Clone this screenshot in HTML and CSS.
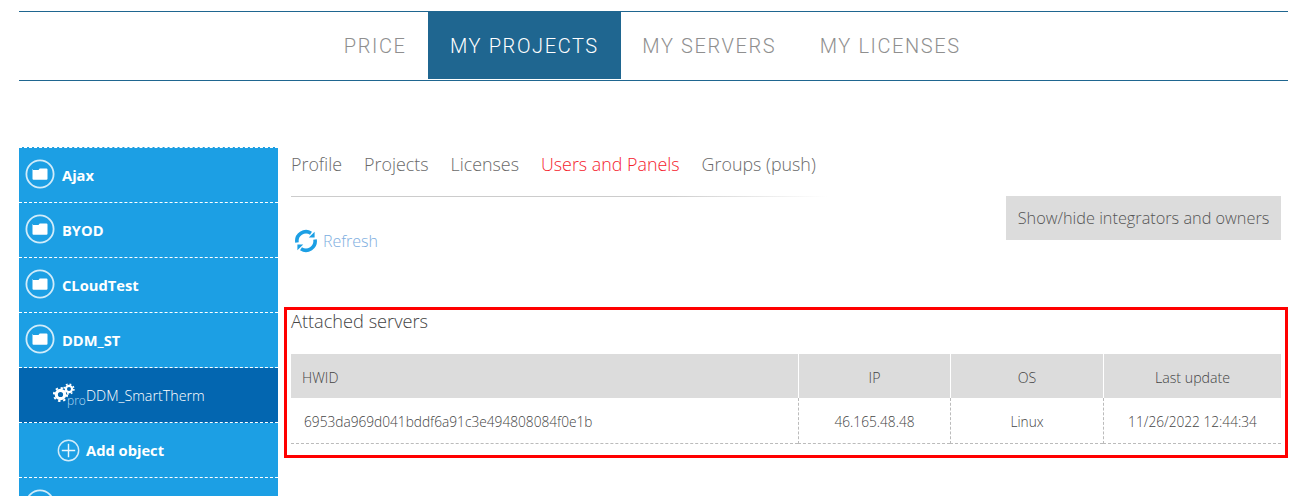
FILE: index.html
```html
<!DOCTYPE html>
<html lang="en">
<head>
<meta charset="utf-8">
<title>My Projects</title>
<link rel="stylesheet" href="styles.css">
</head>
<body>
<svg class="defs" width="0" height="0" aria-hidden="true">
  <symbol id="folder" viewBox="0 0 30 30">
    <circle cx="15" cy="15" r="13.6" fill="none" stroke="#fff" stroke-opacity=".8" stroke-width="1.8"/>
    <path d="M8 11h5.5l1.2-1.6h6.8a1 1 0 0 1 1 1v9.4a1 1 0 0 1-1 1H8.5a1 1 0 0 1-1-1v-9.3a.5.5 0 0 1 .5-.5z" fill="#fff"/>
  </symbol>
</svg>
<header class="topnav">
  <a class="topnav-item">PRICE</a>
  <a class="topnav-item is-active">MY PROJECTS</a>
  <a class="topnav-item">MY SERVERS</a>
  <a class="topnav-item">MY LICENSES</a>
</header>
<div class="layout">
  <nav class="sidebar">
    <a class="side-row"><svg class="folder-icon"><use href="#folder"/></svg><b>Ajax</b></a>
    <a class="side-row"><svg class="folder-icon"><use href="#folder"/></svg><b>BYOD</b></a>
    <a class="side-row"><svg class="folder-icon"><use href="#folder"/></svg><b>CLoudTest</b></a>
    <a class="side-row"><svg class="folder-icon"><use href="#folder"/></svg><b>DDM_ST</b></a>
    <a class="side-row side-sub is-current">
      <span class="pro-icon">
        <svg class="gears" viewBox="0 0 24 20" width="24" height="20">
          <g fill="none" stroke="#fff">
            <circle cx="7.5" cy="11.5" r="4.2" stroke-width="3.2"/>
            <circle cx="7.5" cy="11.5" r="6.6" stroke-width="2" stroke-dasharray="2.4 2.78"/>
            <circle cx="16" cy="6" r="3.1" stroke-width="2.2"/>
            <circle cx="16" cy="6" r="4.9" stroke-width="1.5" stroke-dasharray="1.8 2.05"/>
          </g>
        </svg>
        <span class="pro-label">pro</span>
      </span>
      <span class="sub-name">DDM_SmartTherm</span>
    </a>
    <a class="side-row side-sub side-add">
      <svg class="plus-icon" viewBox="0 0 24 24" width="23" height="23">
        <circle cx="12" cy="12" r="10.6" fill="none" stroke="#fff" stroke-opacity=".8" stroke-width="1.5"/>
        <path d="M12 5v14M5 12h14" stroke="#fff" stroke-opacity=".9" stroke-width="1.5"/>
      </svg>
      <b>Add object</b>
    </a>
    <a class="side-row"><svg class="folder-icon"><use href="#folder"/></svg></a>
  </nav>
  <main class="content">
    <ul class="tabs">
      <li>Profile</li>
      <li>Projects</li>
      <li>Licenses</li>
      <li class="is-active">Users and Panels</li>
      <li>Groups (push)</li>
    </ul>
    <div class="tabs-rule"></div>
    <div class="toolbar">
      <a class="refresh">
        <svg viewBox="0 0 24 24" width="24" height="24">
          <g fill="none" stroke="#1c9fe4" stroke-width="3.6">
            <path d="M3 13.5A9.2 9.2 0 0 1 17 4.2"/>
            <path d="M21 10.5A9.2 9.2 0 0 1 7 19.8"/>
          </g>
          <path d="M20.6 2.8v5.8h-5.8z M3.4 21.2v-5.8h5.8z" fill="#1c9fe4"/>
        </svg>
        <span>Refresh</span>
      </a>
      <button class="toggle-btn" type="button">Show/hide integrators and owners</button>
    </div>
    <section class="servers">
      <h2>Attached servers</h2>
      <table>
        <colgroup>
          <col class="col-hwid"><col class="col-ip"><col class="col-os"><col>
        </colgroup>
        <thead>
          <tr><th class="left">HWID</th><th>IP</th><th>OS</th><th>Last update</th></tr>
        </thead>
        <tbody>
          <tr><td class="hwid">6953da969d041bddf6a91c3e494808084f0e1b</td><td>46.165.48.48</td><td>Linux</td><td>11/26/2022 12:44:34</td></tr>
        </tbody>
      </table>
    </section>
  </main>
</div>
</body>
</html>
```
FILE: styles.css
```css
* { box-sizing: border-box; }
html, body { height: 496px; overflow: hidden; }
body { margin: 0; background: #fff; font-family: "Open Sans", "Liberation Sans", sans-serif; color: #444; }
.defs { position: absolute; }

.topnav {
  display: flex;
  justify-content: center;
  height: 70px;
  margin: 11px 21px 0 19px;
  padding-right: 2px;
  border-top: 1px solid #1f6690;
  border-bottom: 1px solid #1f6690;
  font-family: Roboto, sans-serif;
  font-weight: 300;
  font-size: 20px;
  letter-spacing: 1.6px;
  color: #8f8f8f;
}
.topnav-item { display: flex; align-items: center; height: 67px; padding: 0 22px 0 21.5px; }
.topnav-item.is-active { background: #1f6690; color: #fff; }

.layout { display: flex; height: 349px; overflow: hidden; margin: 66px 21px 0 19px; padding-right: 7px; align-items: flex-start; }

.sidebar { flex: 0 0 259px; background: #1c9fe4; border-top: 1px dashed #fff; color: #fff; font-size: 14.7px; }
.side-row { display: flex; align-items: center; height: 55px; padding-left: 6px; border-bottom: 1px dashed #fff; }
.side-row b { font-weight: 700; }
.folder-icon { width: 30px; height: 30px; margin-right: 7px; margin-top: -2px; }
.side-sub { padding-left: 34px; }
.is-current { background: #0366b0; }
.pro-icon { position: relative; width: 33px; height: 24px; flex: none; }
.gears { display: block; }
.pro-label { position: absolute; left: 14px; top: 9px; font-size: 12px; font-weight: 300; color: #b5dcf5; }
.sub-name { font-size: 14.3px; font-weight: 300; }
.side-add { padding-left: 38px; }
.plus-icon { margin-right: 6px; }

.content { flex: 1; padding: 4px 0 0 13px; min-width: 0; }
.tabs { display: flex; gap: 22px; margin: 0; padding: 0; list-style: none; font-size: 17.85px; font-weight: 300; color: #6a6a6a; line-height: 26px; }
.tabs .is-active { color: #f5222d; }
.tabs-rule { width: 536px; height: 1px; margin-top: 19px; background: linear-gradient(to right, #ccc 0, #ccc 70%, #fff 100%); }

.toolbar { display: flex; justify-content: space-between; align-items: flex-start; height: 110px; }
.refresh { display: flex; align-items: center; gap: 5px; margin: 32px 0 0 3px; color: #7daee0; font-size: 16px; font-weight: 300; }
.toggle-btn { height: 44px; width: 275px; margin-top: -1px; padding: 0; border: 0; background: #dcdcdc; color: #555; font: 300 16.3px "Open Sans", sans-serif; }

.servers { margin: 0 -7px; height: 151px; padding: 0 4px; border: 3px solid #f00; }
.servers h2 { margin: 0; height: 44px; font-size: 18.2px; font-weight: 300; color: #444; line-height: 22px; }
table { width: 100%; border-collapse: separate; border-spacing: 0; table-layout: fixed; font-size: 13.7px; font-weight: 300; }
.col-hwid { width: 507px; }
.col-ip { width: 152px; }
.col-os { width: 153px; }
th { height: 44px; padding-top: 3px; background: #dcdcdc; font-size: 14.2px; font-weight: 300; text-align: center; border-left: 1px solid #fff; }
th:first-child { border-left: 0; }
th.left { text-align: left; padding-left: 11px; }
td { height: 46px; padding-top: 2px; text-align: center; border-left: 1px dashed #bbb; border-bottom: 1px dashed #bbb; }
td:first-child { border-left: 0; }
td.hwid { text-align: left; padding-left: 13px; white-space: nowrap; }
```
